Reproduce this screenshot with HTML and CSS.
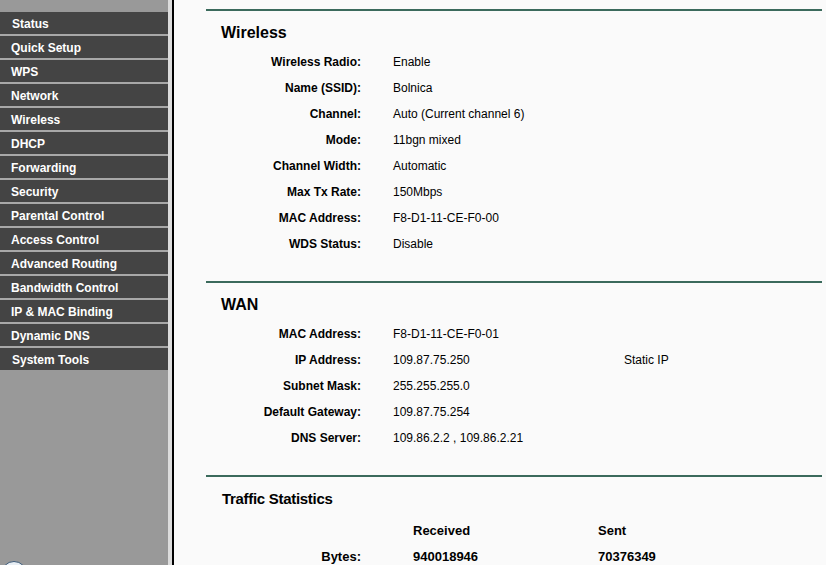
FILE: index.html
```html
<!DOCTYPE html>
<html lang="en" dir="ltr">
  <head>
    <meta charset="utf-8">
    <title>Status</title>
    <link rel="stylesheet" href="styles.css">
  </head>
  <body>
    <div id="menu">
      <ul>
        <li class="first">Status</li>
        <li>Quick Setup</li>
        <li>WPS</li>
        <li>Network</li>
        <li>Wireless</li>
        <li>DHCP</li>
        <li>Forwarding</li>
        <li>Security</li>
        <li>Parental Control</li>
        <li>Access Control</li>
        <li>Advanced Routing</li>
        <li>Bandwidth Control</li>
        <li>IP &amp; MAC Binding</li>
        <li>Dynamic DNS</li>
        <li class="first">System Tools</li>
      </ul>
      <div class="logo"></div>
    </div>
    <div id="main">
      <div class="box">
        <h2>Wireless</h2>
        <div class="row"><b>Wireless Radio:</b><span>Enable</span></div>
        <div class="row"><b>Name (SSID):</b><span>Bolnica</span></div>
        <div class="row"><b>Channel:</b><span>Auto (Current channel 6)</span></div>
        <div class="row"><b>Mode:</b><span>11bgn mixed</span></div>
        <div class="row"><b>Channel Width:</b><span>Automatic</span></div>
        <div class="row"><b>Max Tx Rate:</b><span>150Mbps</span></div>
        <div class="row"><b>MAC Address:</b><span>F8-D1-11-CE-F0-00</span></div>
        <div class="row"><b>WDS Status:</b><span>Disable</span></div>
      </div>
      <div class="box">
        <h2>WAN</h2>
        <div class="row"><b>MAC Address:</b><span>F8-D1-11-CE-F0-01</span></div>
        <div class="row"><b>IP Address:</b><span>109.87.75.250</span><span>Static IP</span></div>
        <div class="row"><b>Subnet Mask:</b><span>255.255.255.0</span></div>
        <div class="row"><b>Default Gateway:</b><span>109.87.75.254</span></div>
        <div class="row"><b>DNS Server:</b><span>109.86.2.2 , 109.86.2.21</span></div>
      </div>
      <div class="box traffic">
        <h2>Traffic Statistics</h2>
        <div class="row head"><b></b><b>Received</b><b>Sent</b></div>
        <div class="row"><b>Bytes:</b><b>940018946</b><b>70376349</b></div>
      </div>
    </div>
  </body>
</html>
```

FILE: styles.css
```css
* {
  margin: 0;
  padding: 0;
}
html, body {
  height: 100%;
  overflow: hidden;
}
body {
  display: flex;
  font-family: "Liberation Sans", Arial, sans-serif;
  font-size: 12px;
  color: #000;
  background: #fafafa;
}
#menu {
  position: relative;
  width: 168px;
  flex: none;
  background: #999;
  border-right: 4px solid #dcdcdc;
  padding-top: 12px;
}
#menu ul {
  list-style: none;
}
#menu li {
  height: 21px;
  padding-top: 1px;
  line-height: 22px;
  overflow: hidden;
  margin-bottom: 2px;
  padding-left: 11px;
  background: #444;
  color: #fff;
  font-weight: bold;
  white-space: nowrap;
}
#menu li.first {
  padding-left: 12px;
}
#menu ul li + li {
  box-shadow: 0 -2px 0 #a8a8a8;
}
#menu .logo {
  position: absolute;
  left: 1px;
  top: 561px;
  width: 24px;
  height: 24px;
  border: 1px solid #3d5a78;
  border-radius: 50%;
  background: #e8eef4;
}
#main {
  flex: 1;
  border-left: 2px solid #000;
  padding-top: 9px;
}
.box {
  margin: 0 4px 0 32px;
  border-top: 2px solid #3b6a5c;
  padding-bottom: 24px;
}
.box h2 {
  font-size: 16px;
  line-height: 20px;
  padding: 12px 0 6px 15px;
}
.row {
  display: grid;
  grid-template-columns: 155px 199px auto;
  column-gap: 32px;
  height: 26px;
  align-items: center;
  white-space: nowrap;
}
.row b:first-child {
  text-align: right;
}
.traffic h2 {
  font-size: 15px;
  letter-spacing: -0.3px;
  padding-left: 16px;
  padding-bottom: 8px;
}
.traffic .row {
  grid-template-columns: 155px 133px auto;
  column-gap: 52px;
  font-size: 13px;
}
```
